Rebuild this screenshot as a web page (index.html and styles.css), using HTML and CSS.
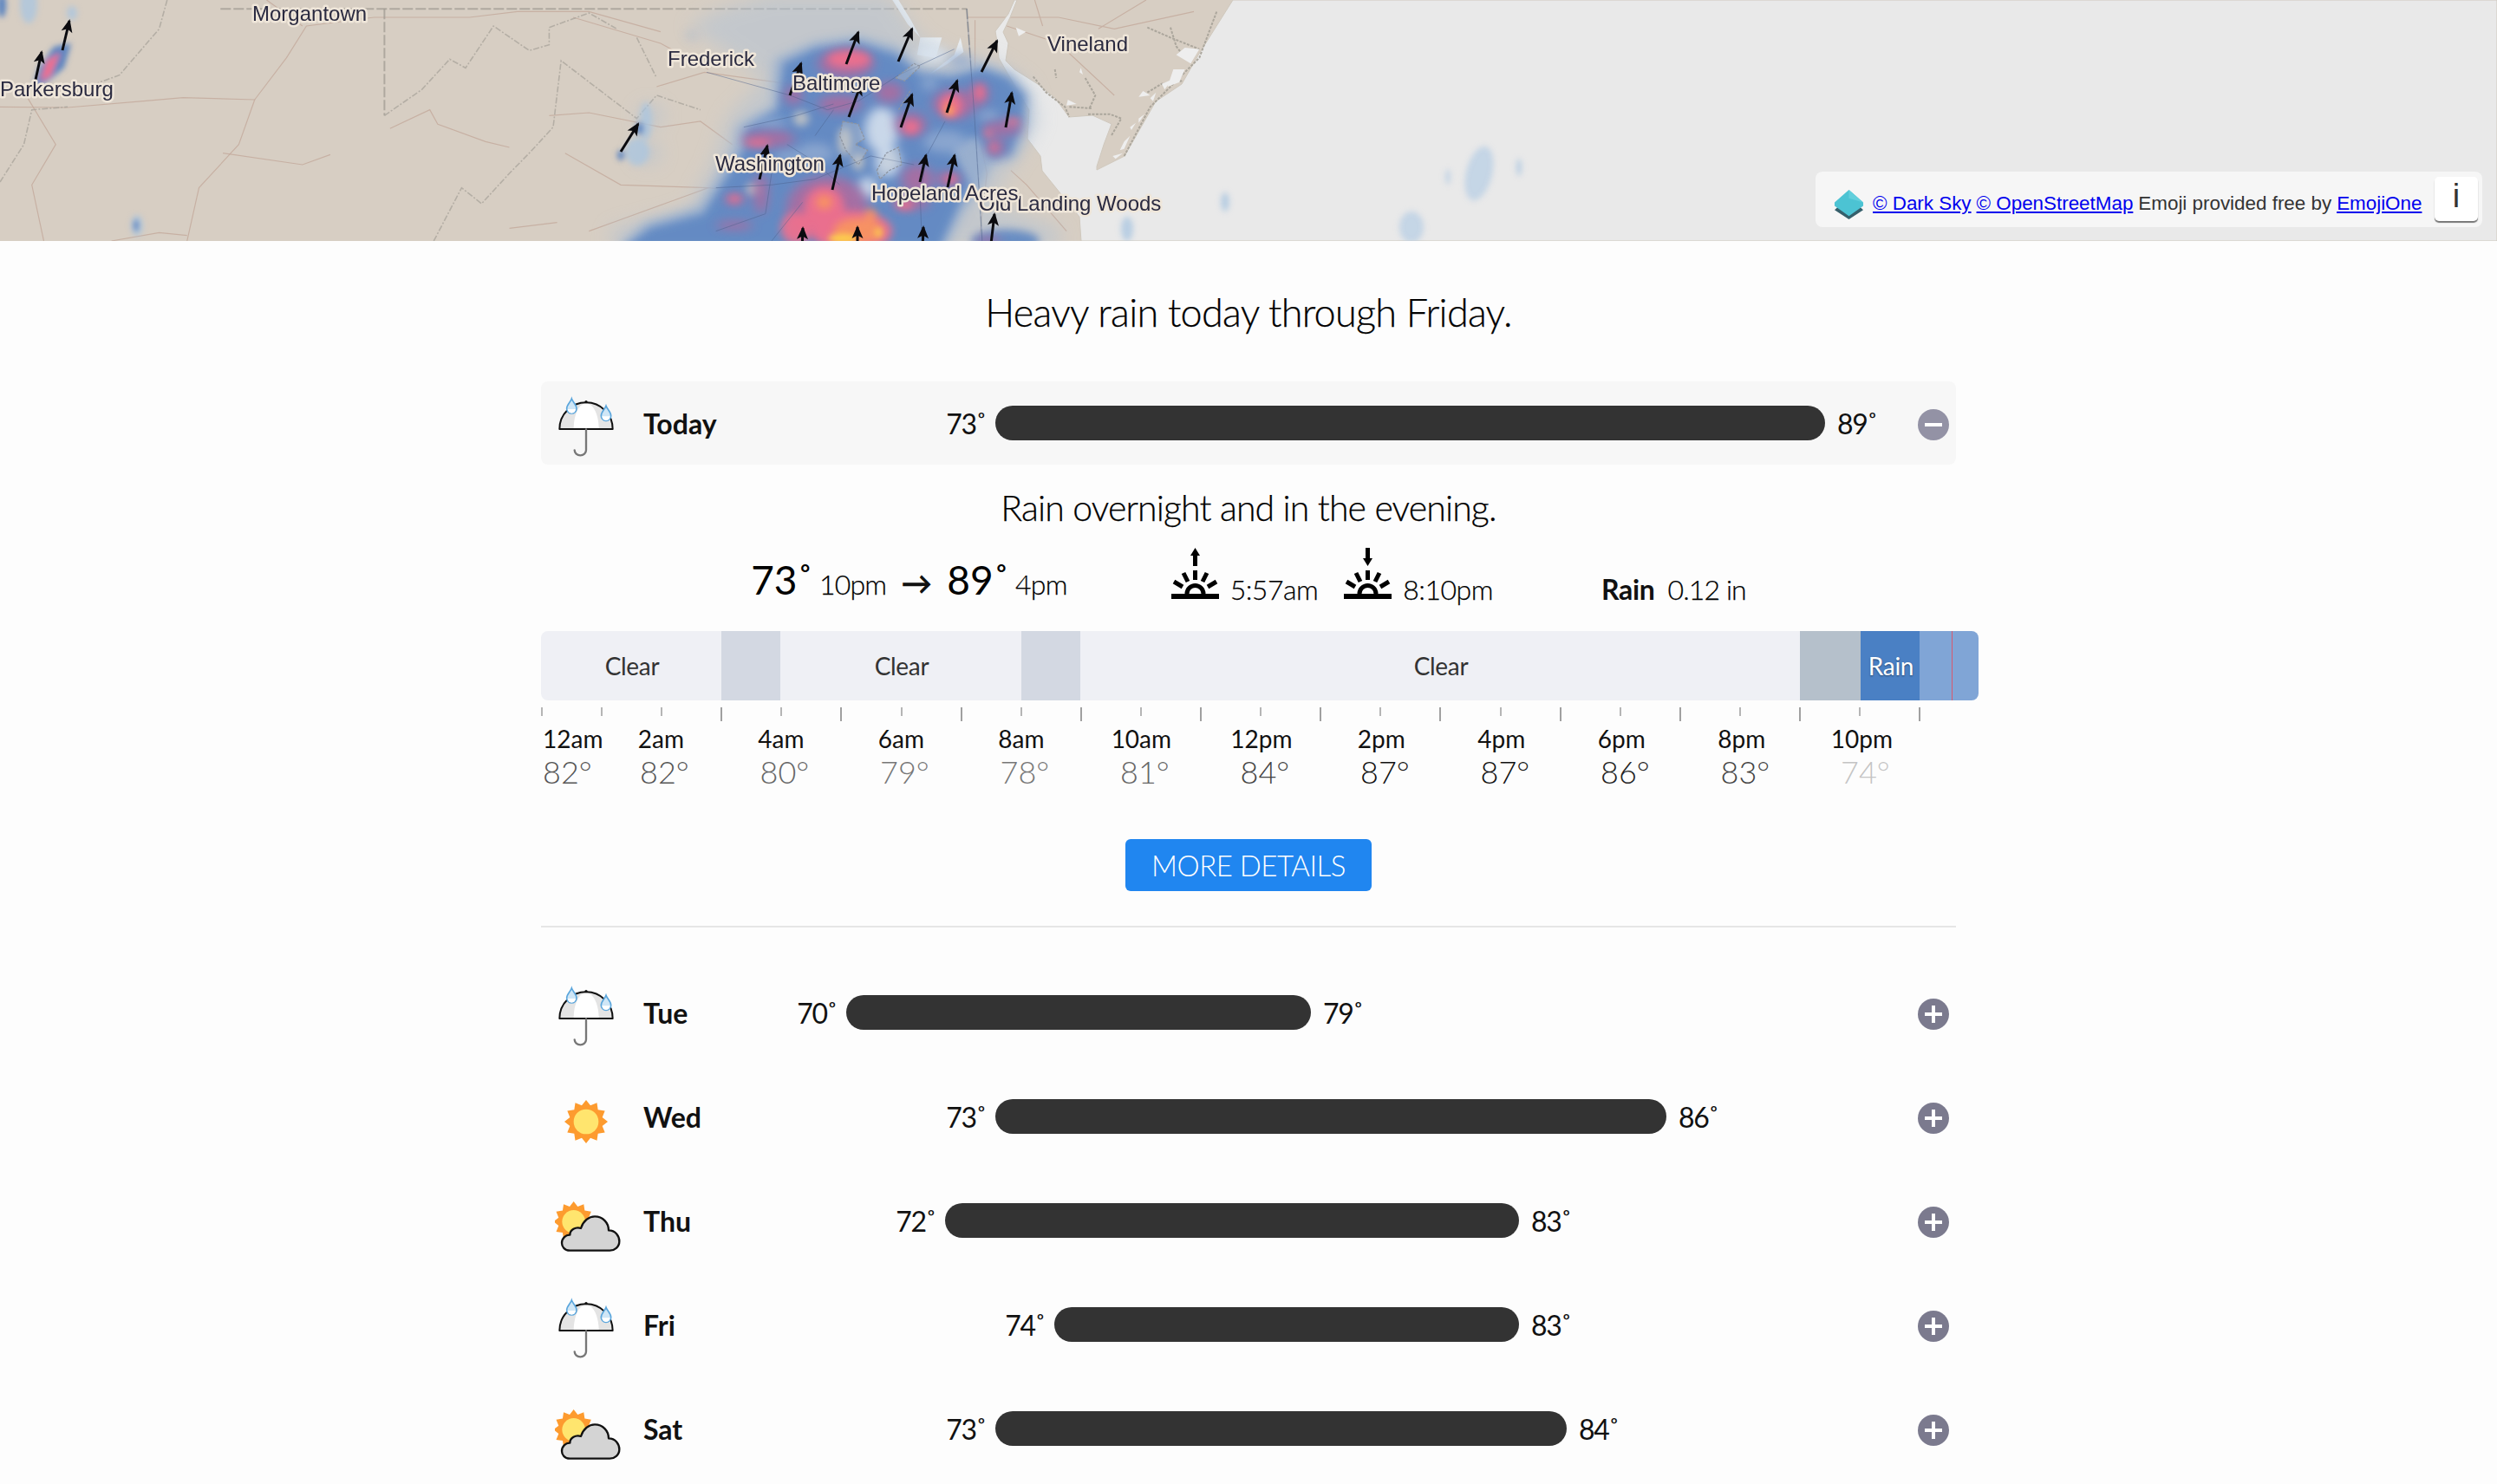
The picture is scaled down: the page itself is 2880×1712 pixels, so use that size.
FILE: index.html
```html
<!DOCTYPE html>
<html lang="en">
<head>
<meta charset="utf-8">
<title>Dark Sky</title>
<link rel="stylesheet" href="styles.css">
</head>
<body>
<svg class="defs" width="0" height="0" aria-hidden="true">
  <defs>
    <g id="umbrella-art">
      <path d="M76 165A92 92 0 0 1 260 165Z" fill="#e4e4e4"/>
      <path d="M125 165C125 112 145 76 168 76C194 76 212 118 212 165Z" fill="#fff"/>
      <path d="M76 165A92 92 0 0 1 260 165Z" fill="none" stroke="#111" stroke-width="6" stroke-linejoin="round"/>
      <circle cx="168" cy="71" r="5" fill="#111"/>
      <path d="M168 166V238A20 18 0 0 1 128 238" fill="none" stroke="#777" stroke-width="7" stroke-linecap="round"/>
      <path d="M118 60C122 72 135 80 135 94A17 17 0 0 1 101 94C101 80 114 72 118 60Z" fill="#cfe6f6" stroke="#5ba6dc" stroke-width="5"/>
      <path d="M104 96A14 14 0 0 0 132 96Z" fill="#fff"/>
      <path d="M237 85C241 97 254 105 254 119A17 17 0 0 1 220 119C220 105 233 97 237 85Z" fill="#cfe6f6" stroke="#5ba6dc" stroke-width="5"/>
      <path d="M223 121A14 14 0 0 0 251 121Z" fill="#fff"/>
    </g>
    <g id="sun-art">
      <polygon fill="#fd9b2f" points="168,87 183,106 205.5,97 209,121 233,124.5 224,147 243,162 224,177 233,199.5 209,203 205.5,227 183,218 168,237 153,218 130.5,227 127,203 103,199.5 112,177 93,162 112,147 103,124.5 127,121 130.5,97 153,106"/>
      <circle cx="168" cy="162" r="43" fill="#ffe56e"/>
    </g>
    <g id="partly-art">
      <use href="#sun-art" transform="translate(125 148) scale(.93) translate(-168 -162)"/>
      <path d="M112 248C92 248 84 233 84 222C84 205 98 193 112 194C112 176 132 165 150 171C158 145 178 130 198 130C226 130 246 152 246 178C270 178 283 198 283 216C283 236 266 248 250 248Z" fill="#d4d4d4" stroke="#111" stroke-width="7" stroke-linejoin="round"/>
    </g>
    <marker id="head" viewBox="0 0 16 14" refX="14" refY="7" markerWidth="16" markerHeight="14" markerUnits="userSpaceOnUse" orient="auto">
      <path d="M16 7L1 .5L4.5 7L1 13.5Z" fill="#0b0b0f"/>
    </marker>
    <filter id="blur30" x="-30%" y="-30%" width="160%" height="160%"><feGaussianBlur stdDeviation="30"/></filter>
    <filter id="blur18" x="-30%" y="-30%" width="160%" height="160%"><feGaussianBlur stdDeviation="18"/></filter>
    <filter id="blur14" x="-30%" y="-30%" width="160%" height="160%"><feGaussianBlur stdDeviation="14"/></filter>
    <filter id="blur9" x="-30%" y="-30%" width="160%" height="160%"><feGaussianBlur stdDeviation="10"/></filter>
    <filter id="blur4" x="-50%" y="-50%" width="200%" height="200%"><feGaussianBlur stdDeviation="3"/></filter>
  </defs>
</svg>

<header class="map">
  <svg class="map-art" viewBox="0 0 2880 278" width="2880" height="278">
    <rect width="2880" height="278" class="land"/>

    <g class="roads" transform="scale(.918 .3333)">
      <path d="M0 370L85 372L180 350L230 338L320 345L300 500L250 650L235 834"/>
      <path d="M280 530L380 570L415 535M490 445L540 380L550 430L610 490L640 510"/>
      <path d="M35 340L70 500L40 640L55 834M140 834L200 805L235 815M640 790L700 770"/>
      <path d="M320 345L360 200L385 90L470 60L590 60L650 40L740 40L830 110M335 0L380 90"/>
      <path d="M690 400L740 390L830 440L880 420L920 500M710 530L780 640L890 650L850 690L740 800"/>
      <path d="M825 300L885 250L990 290L1000 320M720 60L830 150L890 240"/>
      <path d="M1215 60L1330 60L1400 100L1500 40M1265 90L1330 150L1400 330M1300 0L1310 90M1440 0L1380 100"/>
      <path d="M1270 590L1290 640L1340 800M1225 70L1225 400L1240 600L1230 834"/>
      <path d="M1030 450L1100 540L1190 600M890 650L1060 690"/>
    </g>

    <g class="borders" transform="scale(.918 .3333)">
      <path class="state" d="M277 31H1215"/>
      <path class="state" d="M483 31V400"/>
      <path class="ridge" d="M483 400L530 310L565 205L585 235L620 90L665 175L690 155L690 95L740 45L775 100M800 130L825 270"/>
      <path class="ridge" d="M545 834L580 650L605 705L640 600L665 530L695 440L705 210L800 410L825 330L880 380"/>
      <path class="ridge" d="M0 630L30 500L40 380L85 370M210 0L200 100L150 260L120 290"/>
    </g>
    <path class="state" d="M1115 10L1124 133L1133 278L1146 278"/>

    <path class="ocean" d="M1422 0L2880 0L2880 278L1247 278L1245 250L1223 223L1202 197L1200 180L1185 160L1187 127L1167 93L1152 67L1150 48L1148 36L1163 16L1170 0L1173 0L1165 20L1157 37L1163 50L1160 70L1170 80L1197 97L1217 113L1233 135L1260 133L1282 143L1273 167L1265 192L1265 196L1297 180L1333 117L1363 97L1383 62Z"/>
    <g class="water" transform="translate(740 0) scale(.3571 .3333)">
      <path d="M810 0L830 0L870 70L900 130L970 130L950 200L890 190L900 130L860 85Z"/>
      <path d="M1030 130L1010 190L950 240L920 265L990 220L1040 180Z"/>
    </g>

    <g class="marsh" transform="translate(1100 0) scale(.3333)">
      <path d="M275 265L320 320L385 370L400 405M400 370L480 375M465 395L540 395L580 410L545 470M350 240L355 270M455 270L490 330L470 375M670 95L750 130L850 170M750 95L770 160L800 200M670 320L720 290L790 280M590 540L680 370L850 200L910 40"/>
    </g>
    <g class="marsh-white" transform="translate(1100 0) scale(.3333)">
      <path d="M800 165L850 170L820 220L770 190ZM760 240L800 240L780 285L740 300ZM720 290L755 275L730 310ZM680 340L700 320L690 350ZM640 410L660 395L640 425ZM610 440L630 425L615 450ZM590 490L610 470L590 515L575 520ZM550 540L585 530L560 550ZM215 95L250 110L225 125ZM655 315L680 330L640 335ZM440 235L447 258L435 250ZM395 345L425 360L390 365Z"/>
    </g>

    <g transform="translate(740 0) scale(.3571 .3333)">
      <g filter="url(#blur30)" class="pale">
        <path d="M150 90L260 30L420 -20L800 -20L900 130L1000 190L1150 210L1250 290L1285 420L1240 510L1190 590L1130 700L1350 790L1350 860L-100 860L-100 790L150 720L230 560L280 400L400 270Z"/>
        <ellipse cx="20" cy="530" rx="40" ry="40"/>
        <ellipse cx="30" cy="400" rx="40" ry="40"/>
      </g>
      <g filter="url(#blur18)" class="fringe">
        <path d="M430 205L560 145L700 125L830 165L900 235L1000 245L1100 220L1195 255L1255 330L1250 430L1205 550L1130 570L1100 640L1040 730L980 860L-80 860L10 770L185 715L235 630L300 510L310 435L425 365L425 300Z"/>
        <ellipse cx="160" cy="125" rx="10" ry="14"/>
      </g>
      <g filter="url(#blur14)" class="blue">
        <path d="M460 220L560 170L700 150L820 190L900 260L1000 270L1100 240L1180 270L1235 330L1230 420L1190 530L1130 550L1080 470L1000 510L1060 640L1020 720L960 860L-60 860L30 790L200 740L260 640L330 520L340 450L440 380L450 300Z"/>
        <ellipse cx="1175" cy="834" rx="110" ry="40"/>
        <ellipse cx="0" cy="450" rx="12" ry="10"/>
      </g>
      <g filter="url(#blur18)" class="hole-light">
        <ellipse cx="775" cy="450" rx="55" ry="80"/>
        <ellipse cx="795" cy="560" rx="42" ry="52"/>
        <ellipse cx="730" cy="650" rx="30" ry="38"/>
        <ellipse cx="940" cy="190" rx="50" ry="28"/>
      </g>
      <g filter="url(#blur14)" class="hole-tan">
        <ellipse cx="515" cy="410" rx="26" ry="26"/>
        <ellipse cx="655" cy="490" rx="22" ry="50"/>
        <ellipse cx="700" cy="560" rx="20" ry="30"/>
        <ellipse cx="360" cy="655" rx="24" ry="20"/>
      </g>
      <g filter="url(#blur18)" class="hole-mid">
        <ellipse cx="420" cy="425" rx="50" ry="18"/>
        <ellipse cx="980" cy="490" rx="70" ry="38"/>
        <ellipse cx="560" cy="530" rx="60" ry="35"/>
        <ellipse cx="1030" cy="210" rx="40" ry="22"/>
        <ellipse cx="1120" cy="400" rx="35" ry="20"/>
        <ellipse cx="930" cy="290" rx="25" ry="25"/>
        <ellipse cx="470" cy="540" rx="40" ry="22"/>
      </g>
      <g filter="url(#blur18)" class="magenta">
        <ellipse cx="660" cy="220" rx="90" ry="50"/>
        <ellipse cx="490" cy="330" rx="28" ry="32"/>
        <ellipse cx="800" cy="320" rx="45" ry="35"/>
        <ellipse cx="640" cy="360" rx="70" ry="30"/>
        <ellipse cx="410" cy="480" rx="85" ry="28"/>
        <ellipse cx="1010" cy="360" rx="70" ry="50"/>
        <ellipse cx="1090" cy="325" rx="30" ry="40"/>
        <ellipse cx="870" cy="430" rx="50" ry="40"/>
        <ellipse cx="1165" cy="445" rx="60" ry="25"/>
        <ellipse cx="1145" cy="510" rx="28" ry="30"/>
        <ellipse cx="385" cy="670" rx="22" ry="70"/>
        <ellipse cx="300" cy="690" rx="30" ry="18"/>
        <ellipse cx="600" cy="720" rx="130" ry="110"/>
        <ellipse cx="890" cy="620" rx="50" ry="50"/>
        <ellipse cx="990" cy="620" rx="40" ry="25"/>
        <ellipse cx="870" cy="700" rx="60" ry="25"/>
        <ellipse cx="300" cy="780" rx="60" ry="14"/>
        <ellipse cx="1120" cy="834" rx="40" ry="14"/>
      </g>
      <g filter="url(#blur14)" class="pink">
        <ellipse cx="670" cy="205" rx="70" ry="30"/>
        <ellipse cx="1000" cy="365" rx="36" ry="40"/>
        <ellipse cx="1092" cy="320" rx="16" ry="28"/>
        <ellipse cx="1120" cy="462" rx="14" ry="14"/>
        <ellipse cx="1200" cy="420" rx="24" ry="12"/>
        <ellipse cx="1137" cy="510" rx="10" ry="18"/>
        <ellipse cx="870" cy="440" rx="28" ry="24"/>
        <ellipse cx="375" cy="495" rx="45" ry="12"/>
        <ellipse cx="300" cy="688" rx="24" ry="12"/>
        <ellipse cx="590" cy="720" rx="65" ry="75"/>
        <ellipse cx="680" cy="800" rx="130" ry="70"/>
        <ellipse cx="500" cy="790" rx="50" ry="55"/>
        <ellipse cx="850" cy="710" rx="28" ry="16"/>
        <ellipse cx="1000" cy="620" rx="22" ry="12"/>
      </g>
      <g filter="url(#blur14)" class="orange">
        <ellipse cx="993" cy="378" rx="16" ry="22"/>
        <ellipse cx="590" cy="700" rx="26" ry="24"/>
        <ellipse cx="700" cy="800" rx="80" ry="45"/>
        <ellipse cx="740" cy="745" rx="18" ry="22"/>
      </g>
      <g filter="url(#blur9)" class="yellow">
        <ellipse cx="650" cy="826" rx="46" ry="18"/>
        <ellipse cx="765" cy="805" rx="10" ry="18"/>
        <ellipse cx="995" cy="385" rx="6" ry="8"/>
      </g>
      <g class="radar-lines">
        <path d="M210 250L480 330L600 380L700 350L830 260L1010 170M330 440L500 400L620 360M240 650L420 640L560 620L740 540L880 570"/>
        <path d="M1050 30L1075 400L1100 834M980 420L920 540L900 680L905 834M420 600L400 740L240 800M520 700L420 834"/>
        <path d="M560 470L620 380M470 500L560 560L640 640"/>
      </g>
      <g class="radar-coast">
        <path d="M650 420L700 430L720 480L690 500L730 520L700 570L660 520L640 470ZM760 590L790 530L830 510L840 570L800 590L770 620ZM820 270L880 220L900 230L850 280ZM830 380L870 310"/>
      </g>
    </g>

    <g filter="url(#blur4)">
      <ellipse class="b-pale" cx="33" cy="5" rx="10" ry="22"/>
      <ellipse class="b-blue" cx="2" cy="6" rx="5" ry="14"/>
      <ellipse class="b-pale" cx="83" cy="15" rx="6" ry="8"/>
      <path class="b-blue" d="M82 50L74 78L55 94L38 102L45 78L62 54Z"/>
      <path class="b-pink" d="M70 60L58 88L46 94L54 70Z"/>
      <ellipse class="b-pale" cx="158" cy="260" rx="7" ry="12"/>
      <ellipse class="b-blue" cx="157" cy="260" rx="3" ry="7"/>
      <ellipse class="b-pale" cx="745" cy="140" rx="7" ry="22"/>
      <ellipse class="b-blue" cx="738" cy="148" rx="4" ry="7"/>
      <ellipse class="b-pale" cx="735" cy="175" rx="14" ry="16"/>
      <ellipse class="b-blue" cx="716" cy="179" rx="4" ry="6"/>
      <ellipse class="b-pale" cx="1413" cy="233" rx="5" ry="11"/>
      <ellipse class="b-pale" cx="1300" cy="264" rx="7" ry="14"/>
      <ellipse class="b-soft" cx="1706" cy="200" rx="15" ry="32" transform="rotate(14 1706 200)"/>
      <ellipse class="b-soft" cx="1670" cy="204" rx="3" ry="9"/>
      <ellipse class="b-pale" cx="1752" cy="193" rx="3" ry="10"/>
      <ellipse class="b-soft" cx="1628" cy="262" rx="14" ry="18"/>
    </g>

    <g class="arrows">
      <path d="M976 74L990 37"/><path d="M1036 71L1052 33"/><path d="M911 110L924 73"/>
      <path d="M979 135L993 97"/><path d="M1092 130L1104 93"/><path d="M1039 147L1052 109"/>
      <path d="M1132 83L1150 47"/><path d="M1160 147L1167 107"/><path d="M876 207L885 168"/>
      <path d="M960 219L969 179"/><path d="M1061 210L1068 179"/><path d="M1093 216L1101 179"/>
      <path d="M1142 290L1147 247"/><path d="M925 290L926 263"/><path d="M989 290L989 262"/>
      <path d="M1064 290L1065 262"/><path d="M72 58L80 24"/><path d="M41 92L48 60"/>
      <path d="M716 175L736 143"/>
    </g>

    <g class="place-labels">
      <text x="291" y="24">Morgantown</text>
      <text x="0" y="111">Parkersburg</text>
      <text x="770" y="76">Frederick</text>
      <text x="914" y="104">Baltimore</text>
      <text x="825" y="197">Washington</text>
      <text x="1208" y="59">Vineland</text>
      <text x="1129" y="243">Old Landing Woods</text>
      <text x="1005" y="231">Hopeland Acres</text>
    </g>
  </svg>

  <div class="attribution">
    <svg class="gem" viewBox="0 0 36 36" width="35" height="35">
      <path d="M18 8L35 24L18 35L1 24Z" fill="#355f6b"/>
      <path d="M18 0L35 15L35 19L18 31L1 19L1 15Z" fill="#4cc3d3"/>
      <path d="M18 0L35 15L18 10Z" fill="#62cfdc"/>
    </svg>
    <a class="link" href="#">© Dark Sky</a>
    <a class="link" href="#">© OpenStreetMap</a>
    <span>Emoji provided free by</span>
    <a class="link" href="#">EmojiOne</a>
    <button class="info">i</button>
  </div>
</header>

<main class="forecast">
  <h1 class="summary">Heavy rain today through Friday.</h1>

  <section class="day day-open">
    <svg class="day-icon" viewBox="60 18 252 252"><use href="#umbrella-art"/></svg>
    <span class="day-name">Today</span>
    <div class="range" style="margin-left:172px">
      <span class="low">73˚</span>
      <span class="bar" style="width:957px"></span>
      <span class="high">89˚</span>
    </div>
    <span class="toggle toggle-open"><span class="dash"></span></span>
  </section>

  <p class="day-summary">Rain overnight and in the evening.</p>

  <div class="details">
    <div class="det-group det-temps">
      <span class="big">73˚</span><span class="when when-temp">10pm</span>
      <span class="to">→</span>
      <span class="big">89˚</span><span class="when when-temp">4pm</span>
    </div>
    <div class="det-group det-sun">
      <svg class="sun-ico" viewBox="0 0 55 60" width="55" height="60">
        <path d="M27.5 0L33 9H30V21H25V9H22Z"/>
        <g class="rays"><path d="M27.5 26V37M14 29L19 39M41 29L36 39M3 39L13 45M52 39L42 45M18 53A9.5 9.5 0 0 1 37 53"/></g>
        <rect x="0" y="53" width="55" height="6"/>
      </svg>
      <span class="when when-sun">5:57am</span>
      <svg class="sun-ico sun-second" viewBox="0 0 55 60" width="55" height="60">
        <path d="M27.5 21L22 12H25V0H30V12H33Z"/>
        <g class="rays"><path d="M27.5 26V37M14 29L19 39M41 29L36 39M3 39L13 45M52 39L42 45M18 53A9.5 9.5 0 0 1 37 53"/></g>
        <rect x="0" y="53" width="55" height="6"/>
      </svg>
      <span class="when when-sun">8:10pm</span>
    </div>
    <div class="det-group det-rain">
      <b class="rain-label">Rain</b><span class="when rain-val">0.12 in</span>
    </div>
  </div>

  <div class="timeline">
    <div class="seg seg-clear" style="width:208px">Clear</div>
    <div class="seg seg-grey" style="width:68px"></div>
    <div class="seg seg-clear" style="width:278px">Clear</div>
    <div class="seg seg-grey" style="width:68px"></div>
    <div class="seg seg-clear" style="width:830px">Clear</div>
    <div class="seg seg-slate" style="width:70px"></div>
    <div class="seg seg-rain" style="width:68px">Rain</div>
    <div class="seg seg-drizzle" style="width:68px"><span class="now"></span></div>
  </div>

  <div class="ticks">
    <i class="tick"></i><i class="tick"></i><i class="tick"></i><i class="tick major"></i>
    <i class="tick"></i><i class="tick major"></i><i class="tick"></i><i class="tick major"></i>
    <i class="tick"></i><i class="tick major"></i><i class="tick"></i><i class="tick major"></i>
    <i class="tick"></i><i class="tick major"></i><i class="tick"></i><i class="tick major"></i>
    <i class="tick"></i><i class="tick major"></i><i class="tick"></i><i class="tick major"></i>
    <i class="tick"></i><i class="tick major"></i><i class="tick"></i><i class="tick major"></i>
  </div>

  <div class="hours">
    <div class="hour hour-first"><b>12am</b><span style="color:#555">82°</span></div>
    <div class="hour"><b>2am</b><span style="color:#555">82°</span></div>
    <div class="hour"><b>4am</b><span style="color:#666">80°</span></div>
    <div class="hour"><b>6am</b><span style="color:#777">79°</span></div>
    <div class="hour"><b>8am</b><span style="color:#777">78°</span></div>
    <div class="hour"><b>10am</b><span style="color:#666">81°</span></div>
    <div class="hour"><b>12pm</b><span style="color:#444">84°</span></div>
    <div class="hour"><b>2pm</b><span style="color:#111">87°</span></div>
    <div class="hour"><b>4pm</b><span style="color:#111">87°</span></div>
    <div class="hour"><b>6pm</b><span style="color:#222">86°</span></div>
    <div class="hour"><b>8pm</b><span style="color:#444">83°</span></div>
    <div class="hour"><b>10pm</b><span style="color:#c4c4c4">74°</span></div>
  </div>

  <div class="more-wrap"><button class="more">MORE DETAILS</button></div>
  <hr class="rule">

  <section class="day">
    <svg class="day-icon" viewBox="60 18 252 252"><use href="#umbrella-art"/></svg>
    <span class="day-name">Tue</span>
    <div class="range" style="margin-left:0">
      <span class="low">70˚</span><span class="bar" style="width:536px"></span><span class="high">79˚</span>
    </div>
    <span class="toggle"><span class="cross"></span></span>
  </section>
  <section class="day">
    <svg class="day-icon" viewBox="60 18 252 252"><use href="#sun-art"/></svg>
    <span class="day-name">Wed</span>
    <div class="range" style="margin-left:172px">
      <span class="low">73˚</span><span class="bar" style="width:774px"></span><span class="high">86˚</span>
    </div>
    <span class="toggle"><span class="cross"></span></span>
  </section>
  <section class="day">
    <svg class="day-icon" viewBox="60 18 252 252"><use href="#partly-art"/></svg>
    <span class="day-name">Thu</span>
    <div class="range" style="margin-left:114px">
      <span class="low">72˚</span><span class="bar" style="width:662px"></span><span class="high">83˚</span>
    </div>
    <span class="toggle"><span class="cross"></span></span>
  </section>
  <section class="day">
    <svg class="day-icon" viewBox="60 18 252 252"><use href="#umbrella-art"/></svg>
    <span class="day-name">Fri</span>
    <div class="range" style="margin-left:240px">
      <span class="low">74˚</span><span class="bar" style="width:536px"></span><span class="high">83˚</span>
    </div>
    <span class="toggle"><span class="cross"></span></span>
  </section>
  <section class="day">
    <svg class="day-icon" viewBox="60 18 252 252"><use href="#partly-art"/></svg>
    <span class="day-name">Sat</span>
    <div class="range" style="margin-left:172px">
      <span class="low">73˚</span><span class="bar" style="width:659px"></span><span class="high">84˚</span>
    </div>
    <span class="toggle"><span class="cross"></span></span>
  </section>
</main>
</body>
</html>
```

FILE: styles.css
```css
* { box-sizing: border-box; }
html, body { margin: 0; padding: 0; }
body {
  height: 1712px;
  overflow: hidden;
  background: #fdfdfd;
  color: #111;
  font-family: Lato, "Liberation Sans", sans-serif;
}
.defs { position: absolute; }

/* map */
.map { position: relative; height: 278px; overflow: hidden; background: #e8e8e8; }
.map-art { display: block; }
.land { fill: #d7cec3; }
.ocean { fill: #e9e9e9; stroke: #cfc8bd; stroke-width: 1; }
.water path { fill: #e9edf0; }
.roads path { fill: none; stroke: #c2a799; stroke-width: 1.2; vector-effect: non-scaling-stroke; opacity: .75; }
.state { fill: none; stroke: #99958d; stroke-width: 2; stroke-dasharray: 12 3; opacity: .65; vector-effect: non-scaling-stroke; }
.ridge { fill: none; stroke: #a9a49b; stroke-width: 1.6; stroke-dasharray: 7 2 2 2; opacity: .75; vector-effect: non-scaling-stroke; }
.marsh path { fill: none; stroke: #aba69c; stroke-width: 2; stroke-dasharray: 3 1.5; vector-effect: non-scaling-stroke; }
.marsh-white path { fill: #eeeeee; }
.pale { fill: #b4c3d4; opacity: .55; }
.fringe { fill: #8ba7cf; opacity: .75; }
.blue { fill: #5f87c2; opacity: .9; }
.hole-light { fill: #dbe5f0; opacity: .85; }
.hole-tan { fill: #c9c8c4; opacity: .85; }
.hole-mid { fill: #93acd2; opacity: .8; }
.magenta { fill: #b06a9e; opacity: .85; }
.pink { fill: #f26f8c; opacity: .9; }
.orange { fill: #f9955f; opacity: .9; }
.yellow { fill: #fdcb4e; }
.radar-lines path { fill: none; stroke: #4a5f8a; stroke-width: 1; opacity: .45; vector-effect: non-scaling-stroke; }
.radar-coast path { fill: rgba(195, 200, 205, .35); stroke: #8d94a0; stroke-width: 1.2; stroke-dasharray: 3 1.5; vector-effect: non-scaling-stroke; }
.b-pale { fill: #a9c5e0; opacity: .75; }
.b-soft { fill: #b5cde4; opacity: .7; }
.b-blue { fill: #5c84c0; }
.b-pink { fill: #ee6f90; }
.arrows path { fill: none; stroke: #0b0b0f; stroke-width: 3; marker-end: url(#head); }
.place-labels text {
  font-family: "Liberation Sans", Arial, sans-serif;
  font-size: 24px;
  fill: #2a2a40;
  stroke: #efe6d9;
  stroke-width: 5px;
  stroke-linejoin: round;
  paint-order: stroke;
}

/* attribution */
.attribution {
  position: absolute;
  left: 2094px;
  top: 198px;
  width: 769px;
  height: 64px;
  padding: 9px 0 0 21px;
  display: flex;
  align-items: center;
  gap: 6px;
  background: #f6f6f6;
  border-radius: 8px;
  font: 22.4px/30px "Liberation Sans", Arial, sans-serif;
  color: #333;
}
.attribution .gem { flex: none; margin-top: 4px; margin-right: 4px; }
.link { color: #0000ee; text-decoration: underline; }
.info {
  position: absolute;
  right: 5px;
  top: 6px;
  width: 50px;
  height: 51px;
  padding: 0 0 6px;
  border: 0;
  border-radius: 5px;
  background: #fff;
  box-shadow: 0 2px 1px #777;
  color: #333;
  font: 38px "Liberation Sans", Arial, sans-serif;
}

/* forecast */
.forecast { width: 1632px; margin: 0 auto; }
.summary {
  margin: 52px 0 50px;
  height: 60px;
  font-size: 45px;
  letter-spacing: -.72px;
  line-height: 60px;
  font-weight: 300;
  text-align: center;
  color: #000;
  -webkit-text-stroke: .25px #000;
}
.day {
  display: flex;
  align-items: center;
  height: 120px;
  padding-left: 16px;
}
.day-open { height: 96px; background: #f7f7f7; border-radius: 8px; }
.day-icon { width: 84px; height: 84px; flex: none; }
.day-name { width: 138px; margin-left: 18px; flex: none; font-size: 32px; font-weight: 700; color: #111; }
.range { display: flex; align-items: center; font-size: 32px; font-weight: 400; letter-spacing: -1.4px; color: #111; }
.low { width: 85px; margin-right: 11px; text-align: right; flex: none; }
.bar { height: 40px; border-radius: 20px; background: #333; flex: none; }
.high { margin-left: 14px; flex: none; }
.toggle {
  position: relative;
  margin-left: auto;
  margin-right: 8px;
  margin-top: 4px;
  width: 36px;
  height: 36px;
  flex: none;
  border-radius: 50%;
  background: #7b7a8e;
}
.toggle-open { background: #9392a5; }
.dash, .cross::before, .cross::after {
  position: absolute;
  left: 8px;
  top: 16px;
  width: 20px;
  height: 4px;
  background: #fff;
  content: "";
}
.cross::after { transform: rotate(90deg); }
.day-summary {
  margin: 25px 0 0;
  height: 50px;
  font-size: 41px;
  letter-spacing: -.87px;
  line-height: 50px;
  font-weight: 300;
  text-align: center;
  color: #000;
  -webkit-text-stroke: .25px #000;
}
.details {
  display: flex;
  justify-content: center;
  align-items: flex-start;
  gap: 122px;
  height: 98px;
  margin-top: 19px;
  line-height: 70px;
}
.det-group { display: flex; align-items: baseline; }
.det-temps { padding-top: 4px; }
.det-sun { padding-top: 2px; margin-left: -2px; }
.det-rain { padding-top: 15px; margin-left: 3px; }
.big { font-size: 46px; font-weight: 400; color: #000; }
.when { font-size: 32px; font-weight: 300; letter-spacing: -.5px; color: #000; -webkit-text-stroke: .25px #000; }
.when-temp { margin-left: 7px; letter-spacing: -.8px; }
.to { margin: 0 17px; font-size: 36px; font-weight: 700; }
.sun-ico { margin-right: 13px; }
.sun-second { margin-left: 30px; }
.rays { fill: none; stroke: #000; stroke-width: 5; }
.rain-label { font-size: 32px; font-weight: 700; margin-right: 15px; letter-spacing: -.3px; }
.rain-val { letter-spacing: -.9px; }
.timeline {
  display: flex;
  width: 1658px;
  height: 80px;
  border-radius: 8px;
  overflow: hidden;
}
.seg {
  position: relative;
  flex: none;
  padding-left: 2px;
  text-align: center;
  font-size: 28px;
  letter-spacing: -.3px;
  line-height: 80px;
  color: #333;
}
.seg-clear { background: #eff0f5; }
.seg-grey { background: #d3d8e2; }
.seg-slate { background: #b5c0cb; }
.seg-rain { background: #4a80c4; color: #fff; text-shadow: 0 1px 2px rgba(0,0,0,.45); }
.seg-drizzle { background: #80a5d6; }
.now { position: absolute; left: 37px; top: 0; bottom: 0; width: 1px; background: #d75a6e; }
.ticks { display: flex; width: 1658px; margin-top: 8px; height: 16px; align-items: flex-start; }
.tick { flex: none; width: 69.1px; height: 10px; border-left: 2px solid #b5b5b5; }
.tick.major { height: 16px; border-left-color: #a0a0a0; }
.hours { display: flex; width: 1665px; margin-top: 2px; }
.hour { flex: none; width: 138.5px; text-align: center; white-space: nowrap; }
.hour-first { width: 69.1px; padding-left: 2px; text-align: left; }
.hour b { display: block; font-size: 28px; line-height: 36px; font-weight: 400; color: #111; }
.hour span { display: block; font-size: 36px; line-height: 40px; font-weight: 300; }
.hour:not(.hour-first) span { padding-left: 8px; }
.more-wrap { display: flex; justify-content: center; margin-top: 58px; }
.more {
  width: 284px;
  height: 60px;
  padding: 0;
  border: 0;
  border-radius: 6px;
  background: #2086f0;
  color: #fff;
  font-family: Lato, sans-serif;
  font-size: 33px;
  letter-spacing: -.5px;
  font-weight: 300;
}
.rule { margin: 40px 0 38px; height: 2px; border: 0; background: #e6e6e6; }
```
